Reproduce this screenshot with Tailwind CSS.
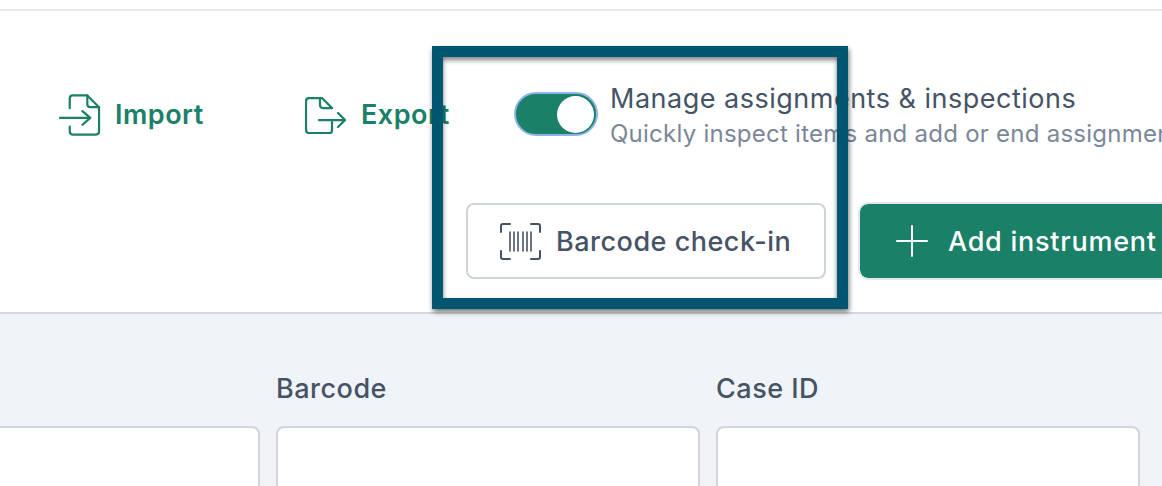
<!DOCTYPE html>
<html lang="en">
<head>
  <meta charset="UTF-8" />
  <title>Instruments</title>
  <script src="https://cdn.jsdelivr.net/npm/@tailwindcss/browser@4"></script>
</head>
<body class="relative w-[1162px] h-[486px] overflow-hidden bg-white font-['Inter',sans-serif]">
  <header class="h-[314px] pt-[9px] border-b-2 border-[#d5d8e0] bg-white">
    <div class="h-[2px] bg-[#e6e8ec]"></div>

    <div class="flex items-start pl-[59px] pt-[79px] h-[192px] whitespace-nowrap">
      <a class="flex items-center gap-[14px] w-[245px] h-[50px] shrink-0 text-[#1a8067] text-[27px] tracking-[0.5px] font-semibold">
        <svg class="w-[42px] h-[42px]" viewBox="0 0 43 42" fill="none" stroke="currentColor" stroke-width="2.25" stroke-linecap="round" stroke-linejoin="round">
          <path d="M11 14V4q0-3 3-3h15l12 12v25q0 3-3 3H14q-3 0-3-3v-5" />
          <path d="M29 1v9q0 3 3 3h9" />
          <path d="M1 24h31M24 17l8 7-8 7" />
        </svg>
        Import
      </a>
      <a class="flex items-center gap-[15px] w-[210px] h-[50px] shrink-0 pl-[1px] text-[#1a8067] text-[27px] tracking-[0.5px] font-semibold">
        <svg class="w-[41px] h-[37px]" viewBox="0 0 41 37" fill="none" stroke="currentColor" stroke-width="2.25" stroke-linecap="round" stroke-linejoin="round">
          <path d="M27 11V11L17 1H4Q1 1 1 4v29q0 3 3 3h21q2 0 2-3v-8" />
          <path d="M15 1v7q0 3 3 3h9" />
          <path d="M14 23h26M33 16l7 7-7 7" />
        </svg>
        Export
      </a>
      <div class="w-[84px] h-[44px] mt-[2px] rounded-full bg-[#1a8067] border-2 border-[#8fb3ea] flex items-center justify-end pr-[2px] shrink-0">
        <span class="w-[37px] h-[37px] rounded-full bg-white"></span>
      </div>
      <div class="ml-[12px] mt-[-8px]">
        <p class="text-[27px] leading-[34px] tracking-[0.5px] text-[#465366]">Manage assignments &amp; inspections</p>
        <p class="text-[24px] leading-[36px] tracking-[0.25px] text-[#7b8798]">Quickly inspect items and add or end assignments</p>
      </div>
    </div>

    <div class="flex items-start pl-[466px] gap-[34px] whitespace-nowrap">
      <button class="flex items-center gap-[15px] w-[360px] h-[76px] pl-[32px] pt-[2px] rounded-[8px] border-2 border-[#cfd4da] bg-white text-[#465366] text-[27px] tracking-[0.5px] font-medium shrink-0">
        <svg class="w-[41px] h-[37px] mt-[-2px]" viewBox="0 0 41 37" fill="none" stroke="currentColor" stroke-width="2" stroke-linecap="round">
          <path d="M1 9V3q0-2 2-2h7M31 1h7q2 0 2 2v6M1 28v6q0 2 2 2h7M31 36h7q2 0 2-2v-6" />
          <path d="M10 9v19M14 9v19M18 9v19M23 9v19M27 9v19M31 9v19" stroke-width="1.6" />
        </svg>
        Barcode check-in
      </button>
      <button class="flex items-center gap-[20px] w-[320px] h-[74px] mt-[1px] pl-[36px] pt-[2px] rounded-[8px] bg-[#1a8067] outline-2 outline-[#e4e7ec] text-white text-[27px] tracking-[0.75px] font-medium shrink-0">
        <svg class="w-[32px] h-[32px] mt-[-2px]" viewBox="0 0 32 32" fill="none" stroke="currentColor" stroke-width="2" stroke-linecap="round">
          <path d="M16 1v30M1 16h30" />
        </svg>
        Add instrument
      </button>
    </div>
  </header>

  <section class="h-[172px] overflow-hidden bg-[#f0f3f8] flex items-start gap-[16px] ml-[-164px] pt-[59px]">
    <div class="w-[424px] shrink-0">
      <div class="h-[32px]"></div>
      <div class="h-[100px] mt-[21px] rounded-[8px] border-2 border-[#d0d4de] bg-white"></div>
    </div>
    <div class="w-[424px] shrink-0">
      <label class="block h-[32px] text-[27px] leading-[32px] tracking-[0.5px] font-medium text-[#465366]">Barcode</label>
      <div class="h-[100px] mt-[21px] rounded-[8px] border-2 border-[#d0d4de] bg-white"></div>
    </div>
    <div class="w-[424px] shrink-0">
      <label class="block h-[32px] text-[27px] leading-[32px] tracking-[0.5px] font-medium text-[#465366]">Case ID</label>
      <div class="h-[100px] mt-[21px] rounded-[8px] border-2 border-[#d0d4de] bg-white"></div>
    </div>
  </section>

  <!-- highlight frame sits over the toolbar -->
  <div class="absolute left-[432px] top-[46px] w-[416px] h-[263px] border-[11px] border-[#01566f] shadow-[1px_3px_5px_rgba(0,0,0,0.55),inset_0_3px_5px_rgba(0,0,0,0.5)] pointer-events-none"></div>
</body>
</html>
